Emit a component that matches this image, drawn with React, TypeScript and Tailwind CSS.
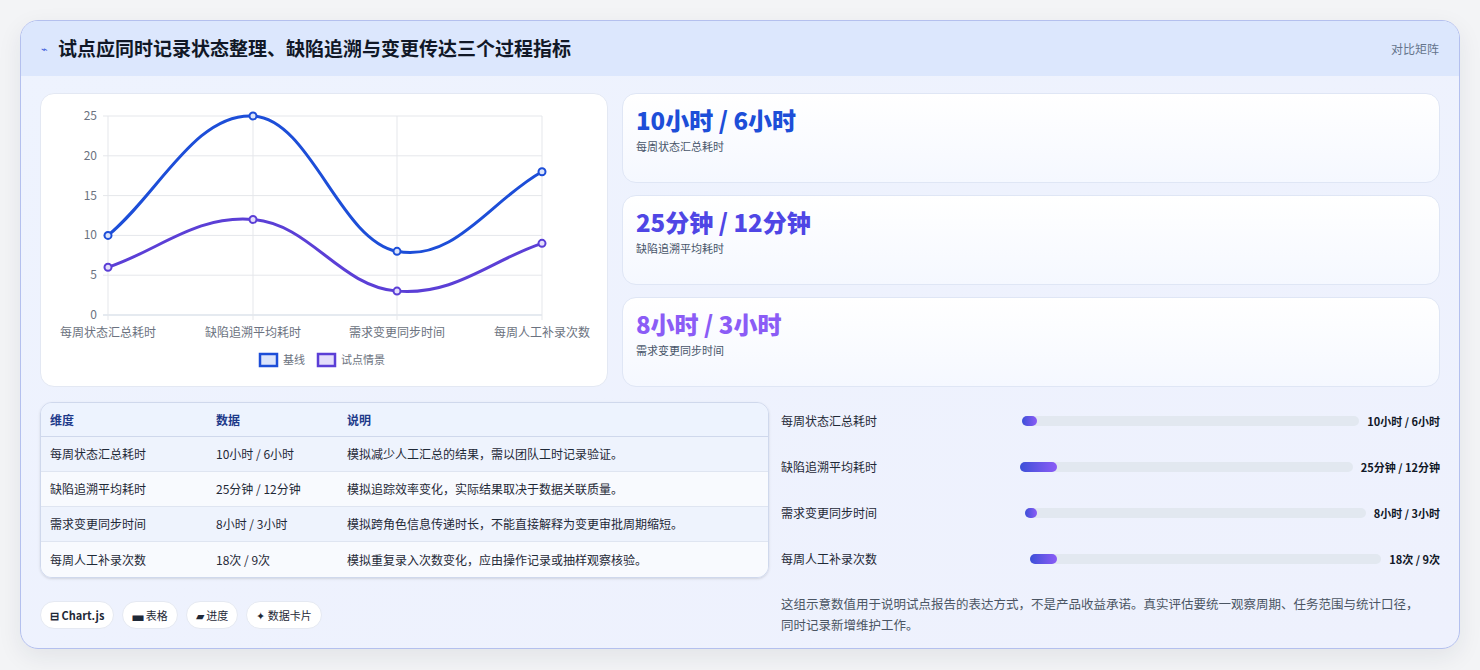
import React from "react";

const font = { fontFamily: '"Noto Sans CJK SC", "Noto Sans", sans-serif' };

const X = [67, 212, 356, 501];
const yOf = (v: number) => 221 - v * 7.96;

function curve(vals: number[]) {
  const pts = vals.map((v, i) => [X[i], yOf(v)]);
  let d = `M${pts[0][0]},${pts[0][1]}`;
  const t = 0.4;
  for (let i = 0; i < pts.length - 1; i++) {
    const p0 = pts[i - 1] || pts[i];
    const p1 = pts[i];
    const p2 = pts[i + 1];
    const p3 = pts[i + 2] || p2;
    const c1 = [p1[0] + ((p2[0] - p0[0]) * t) / 2, p1[1] + ((p2[1] - p0[1]) * t) / 2];
    const c2 = [p2[0] - ((p3[0] - p1[0]) * t) / 2, p2[1] - ((p3[1] - p1[1]) * t) / 2];
    if (i === 0) { c1[0] = p1[0] + (p2[0] - p1[0]) * 0.35; c1[1] = p1[1] + (p2[1] - p1[1]) * 0.35; }
    if (i === pts.length - 2) { c2[0] = p2[0] - (p2[0] - p1[0]) * 0.35; c2[1] = p2[1] - (p2[1] - p1[1]) * 0.35; }
    d += ` C${c1[0]},${c1[1]} ${c2[0]},${c2[1]} ${p2[0]},${p2[1]}`;
  }
  return d;
}

function Chart() {
  const base = [10, 25, 8, 18];
  const pilot = [6, 12, 3, 9];
  const labels = ["每周状态汇总耗时", "缺陷追溯平均耗时", "需求变更同步时间", "每周人工补录次数"];
  return (
    <svg width="566" height="292" viewBox="0 0 566 292" style={font}>
      {[0, 5, 10, 15, 20, 25].map((v) => (
        <g key={v}>
          <line x1={62} x2={501} y1={yOf(v)} y2={yOf(v)} stroke={v === 0 ? "#cbd5e1" : "#e5e7eb"} />
          <text x={56} y={yOf(v) + 4} textAnchor="end" fontSize="12" fill="#6b7280">{v}</text>
        </g>
      ))}
      {X.map((x) => (
        <line key={x} x1={x} x2={x} y1={22} y2={226} stroke="#e5e7eb" />
      ))}
      {labels.map((l, i) => (
        <text key={l} x={X[i]} y={243} textAnchor="middle" fontSize="12" fill="#6b7280">{l}</text>
      ))}
      <path d={curve(base)} fill="none" stroke="#1d4ed8" strokeWidth="3" />
      <path d={curve(pilot)} fill="none" stroke="#5b3fd6" strokeWidth="3" />
      {base.map((v, i) => <circle key={"b" + i} cx={X[i]} cy={yOf(v)} r="3.5" fill="#dbe4fb" stroke="#1d4ed8" strokeWidth="2" />)}
      {pilot.map((v, i) => <circle key={"p" + i} cx={X[i]} cy={yOf(v)} r="3.5" fill="#e4defb" stroke="#5b3fd6" strokeWidth="2" />)}
      <rect x={219} y={260} width={17} height={12} fill="#dbe4fb" stroke="#1d4ed8" strokeWidth="2.5" />
      <text x={242} y={270} fontSize="11" fill="#6b7280">基线</text>
      <rect x={277} y={260} width={17} height={12} fill="#e4defb" stroke="#5b3fd6" strokeWidth="2.5" />
      <text x={300} y={270} fontSize="11" fill="#6b7280">试点情景</text>
    </svg>
  );
}

const stats = [
  { v: "10小时 / 6小时", l: "每周状态汇总耗时", c: "text-[#1d4ed8]" },
  { v: "25分钟 / 12分钟", l: "缺陷追溯平均耗时", c: "text-[#4f46e5]" },
  { v: "8小时 / 3小时", l: "需求变更同步时间", c: "text-[#8b5cf6]" },
];

const rows = [
  ["每周状态汇总耗时", "10小时 / 6小时", "模拟减少人工汇总的结果，需以团队工时记录验证。"],
  ["缺陷追溯平均耗时", "25分钟 / 12分钟", "模拟追踪效率变化，实际结果取决于数据关联质量。"],
  ["需求变更同步时间", "8小时 / 3小时", "模拟跨角色信息传递时长，不能直接解释为变更审批周期缩短。"],
  ["每周人工补录次数", "18次 / 9次", "模拟重复录入次数变化，应由操作记录或抽样观察核验。"],
];

const bars = [
  { l: "每周状态汇总耗时", v: "10小时 / 6小时", w: 15, ml: "ml-[4px]" },
  { l: "缺陷追溯平均耗时", v: "25分钟 / 12分钟", w: 37, ml: "ml-[2px]" },
  { l: "需求变更同步时间", v: "8小时 / 3小时", w: 12, ml: "ml-[7px]" },
  { l: "每周人工补录次数", v: "18次 / 9次", w: 27, ml: "ml-[12px]" },
];

export default function App() {
  return (
    <div className="w-[1480px] h-[670px] bg-[#f3f4f6] pt-[20px] pl-[20px]" style={font}>
      <div className="w-[1440px] h-[629px] rounded-[18px] border border-[#b4c0ee] bg-gradient-to-br from-[#eef3fe] to-[#eef1fd] overflow-hidden shadow-[0_8px_24px_rgba(30,41,59,0.08)]">
        <div className="h-[55px] bg-[#dce7fd] flex items-center justify-between px-[20px]">
          <div className="flex items-center gap-[10px]">
            <span className="text-[#3b5bdb] text-[11px]">⌁</span>
            <span className="text-[19px] font-bold text-[#111827]">试点应同时记录状态整理、缺陷追溯与变更传达三个过程指标</span>
          </div>
          <span className="text-[12px] text-[#64748b]">对比矩阵</span>
        </div>
        <div className="px-[19px] pt-[17px]">
          <div className="flex gap-[14px]">
            <div className="w-[568px] h-[294px] bg-white rounded-[14px] border border-[#e3e8f3] overflow-hidden">
              <Chart />
            </div>
            <div className="flex-1 flex flex-col gap-[12px]">
              {stats.map((s) => (
                <div key={s.l} className="h-[90px] rounded-[14px] border border-[#dfe6f5] bg-gradient-to-b from-white to-[#f5f8ff] px-[13px] pt-[10px]">
                  <div className={`text-[24px] font-black leading-[32px] ${s.c}`}>{s.v}</div>
                  <div className="text-[11px] text-[#475569] mt-[2px]">{s.l}</div>
                </div>
              ))}
            </div>
          </div>
          <div className="flex gap-[12px] mt-[15px]">
            <div className="w-[729px]">
              <div className="rounded-[12px] border border-[#cfd8ec] overflow-hidden text-[12px] shadow-sm">
                <div className="flex h-[34px] items-center bg-[#edf3fe] border-b border-[#cfd8ec] text-[#1e3a8a] font-semibold">
                  <div className="w-[175px] pl-[9px]">维度</div>
                  <div className="w-[131px]">数据</div>
                  <div>说明</div>
                </div>
                {rows.map((r, i) => (
                  <div key={r[0]} className={`flex h-[35px] items-center text-[#1f2937] ${i % 2 === 0 ? "bg-[#eef3fd]" : "bg-[#f8fafe]"} ${i < 3 ? "border-b border-[#dfe5f1]" : ""}`}>
                    <div className="w-[175px] pl-[9px]">{r[0]}</div>
                    <div className="w-[131px]">{r[1]}</div>
                    <div>{r[2]}</div>
                  </div>
                ))}
              </div>
              <div className="flex gap-[8px] mt-[23px] text-[11px] text-[#1f2937]">
                {["⊟ Chart.js", "▄ 表格", "▰ 进度", "✦ 数据卡片"].map((t, i) => (
                  <span key={t} className={`h-[28px] px-[9px] flex items-center rounded-full bg-white border border-[#e5e9f2] ${i === 0 ? "font-bold" : ""}`}>{t}</span>
                ))}
              </div>
            </div>
            <div className="flex-1 pt-[9px]">
              {bars.map((b) => (
                <div key={b.l} className="flex items-center h-[20px] mb-[26px] text-[12px]">
                  <div className="w-[237px] text-[#1f2937]">{b.l}</div>
                  <div className={`flex-1 h-[10px] rounded-full bg-[#e2e8f0] ${b.ml}`}>
                    <div className="h-full rounded-full bg-gradient-to-r from-[#3b4fd8] to-[#8b5cf6]" style={{ width: b.w }} />
                  </div>
                  <div className="ml-[8px] font-bold text-[#111827] text-[11px]">{b.v}</div>
                </div>
              ))}
              <p className="text-[12.5px] leading-[21px] text-[#4b5563] mt-[-2px] pr-[10px]">这组示意数值用于说明试点报告的表达方式，不是产品收益承诺。真实评估要统一观察周期、任务范围与统计口径，同时记录新增维护工作。</p>
            </div>
          </div>
        </div>
      </div>
    </div>
  );
}
